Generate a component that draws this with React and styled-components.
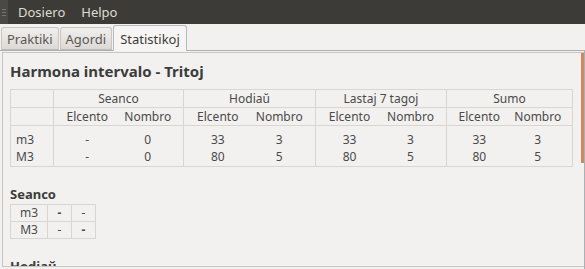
import React from 'react';
import styled, { createGlobalStyle } from 'styled-components';

const GlobalStyle = createGlobalStyle`
  html, body {
    margin: 0;
    padding: 0;
    background: #f2f1f0;
  }
  body {
    font-family: "Noto Sans", "DejaVu Sans", sans-serif;
    color: #3c3c3c;
  }
`;

const Window = styled.div`
  width: 585px;
  height: 269px;
  display: flex;
  flex-direction: column;
  overflow: hidden;
  background: #f2f1f0;
`;

const MenuBar = styled.div`
  height: 24px;
  background: #3c3b37;
  display: flex;
  align-items: center;
`;

const Grip = styled.div`
  width: 8px;
  height: 24px;
  background: #4a4945;
  display: flex;
  flex-direction: column;
  justify-content: center;
  align-items: center;
  gap: 2px;

  span {
    width: 4px;
    height: 1px;
    background: #77756f;
  }
`;

const MenuItem = styled.div`
  color: #dfdbd2;
  font-size: 13px;
  padding: 0 8px;
  margin-left: ${p => (p.first ? '2px' : '0')};
`;

const TabBar = styled.div`
  height: 26px;
  display: flex;
  align-items: flex-end;
  padding-left: 1px;
  gap: 1px;
`;

const Tab = styled.div`
  height: ${p => (p.active ? '26px' : '23px')};
  padding: 0 ${p => (p.active ? '6px' : '5px')};
  box-sizing: border-box;
  display: flex;
  align-items: center;
  font-size: 13px;
  color: ${p => (p.active ? '#3c3c3c' : '#5a5855')};
  border: 1px solid ${p => (p.active ? '#b4bcc0' : '#c9c5c0')};
  border-bottom: ${p => (p.active ? 'none' : '1px solid #bfbab4')};
  border-radius: 3px 3px 0 0;
  background: ${p =>
    p.active ? '#f6f5f4' : 'linear-gradient(#f0efed, #dcd9d5)'};
  margin-bottom: ${p => (p.active ? '-1px' : '0')};
  position: relative;
  z-index: ${p => (p.active ? 2 : 1)};
`;

const Pane = styled.div`
  flex: 1;
  border-top: 1px solid #a8b1b5;
  border-right: 1px solid #a8b1b5;
  padding: 1px 0 2px 2px;
  display: flex;
  min-height: 0;
`;

const Viewport = styled.div`
  flex: 1;
  position: relative;
  border: 1px solid #cbc6c0;
  border-right: none;
  overflow: hidden;
  padding: 9px 0 0 7px;
`;

const ScrollThumb = styled.div`
  position: absolute;
  right: 0;
  top: 0;
  width: 3px;
  height: 110px;
  background: #d2875c;
`;

const Title = styled.div`
  font-size: 15px;
  font-weight: bold;
  color: #3c3c3c;
  line-height: 18px;
  margin-bottom: 9px;
`;

const Grid = styled.table`
  border-collapse: collapse;
  font-size: 12px;
  color: #4a4a4a;
  width: 562px;
  table-layout: fixed;

  td, th {
    font-weight: normal;
    padding: 0;
    text-align: center;
    line-height: 17px;
  }
`;

const HeadCell = styled.th`
  border: 1px solid #d9d5d1;
  height: 17px;
`;

const SubHead = styled.th`
  border-bottom: 1px solid #d9d5d1;
  border-left: ${p => (p.edge ? '1px solid #d9d5d1' : 'none')};
  border-right: ${p => (p.end ? '1px solid #d9d5d1' : 'none')};
  padding-right: ${p => (p.end && !p.edge ? '6px' : '0')} !important;
  padding-left: ${p => (p.edge && !p.end ? '2px' : '0')} !important;
  height: 17px;
`;

const Cell = styled.td`
  border-left: ${p => (p.edge ? '1px solid #d9d5d1' : 'none')};
  border-right: ${p => (p.end ? '1px solid #d9d5d1' : 'none')};
  text-align: ${p => (p.left ? 'left' : 'center')} !important;
  padding-left: ${p => (p.left ? '5px' : p.edge ? '2px' : '0')} !important;
  padding-right: ${p => (p.end && !p.left ? '6px' : '0')} !important;
  padding-top: ${p => (p.top ? '5px' : '0')} !important;
  padding-bottom: ${p => (p.bottom ? '1px' : '0')} !important;
`;

const DataBody = styled.tbody`
  tr:last-child td {
    border-bottom: 1px solid #d9d5d1;
  }
`;

const SectionTitle = styled.div`
  font-size: 13px;
  font-weight: bold;
  color: #3c3c3c;
  margin-top: 20px;
  line-height: 15px;
  margin-bottom: 2px;
`;

const Mini = styled.table`
  border-collapse: collapse;
  font-size: 12px;
  color: #4a4a4a;

  td {
    border: 1px solid #d9d5d1;
    height: 16px;
    line-height: 16px;
    padding: 0;
    text-align: center;
  }
`;

const MiniCell = styled.td`
  width: ${p => p.w}px;
  font-weight: ${p => (p.strong ? 'bold' : 'normal')};
`;

const groups = ['Seanco', 'Hodiaŭ', 'Lastaj 7 tagoj', 'Sumo'];
const widths = [130, 132, 131, 126];
const rows = [
  { name: 'm3', vals: ['-', '0', '33', '3', '33', '3', '33', '3'] },
  { name: 'M3', vals: ['-', '0', '80', '5', '80', '5', '80', '5'] },
];

export default function App() {
  return (
    <Window>
      <GlobalStyle />
      <MenuBar>
        <Grip>
          <span />
          <span />
          <span />
        </Grip>
        <MenuItem first>Dosiero</MenuItem>
        <MenuItem>Helpo</MenuItem>
      </MenuBar>
      <TabBar>
        <Tab>Praktiki</Tab>
        <Tab>Agordi</Tab>
        <Tab active>Statistikoj</Tab>
      </TabBar>
      <Pane>
        <Viewport>
          <ScrollThumb />
          <Title>Harmona intervalo - Tritoj</Title>
          <Grid>
            <colgroup>
              <col style={{ width: 43 }} />
              {widths.map((w, i) => (
                <React.Fragment key={i}>
                  <col style={{ width: w / 2 }} />
                  <col style={{ width: w / 2 }} />
                </React.Fragment>
              ))}
            </colgroup>
            <thead>
              <tr>
                <HeadCell />
                {groups.map(g => (
                  <HeadCell key={g} colSpan={2}>{g}</HeadCell>
                ))}
              </tr>
              <tr>
                <SubHead edge end />
                {groups.map(g => (
                  <React.Fragment key={g}>
                    <SubHead edge>Elcento</SubHead>
                    <SubHead end>Nombro</SubHead>
                  </React.Fragment>
                ))}
              </tr>
            </thead>
            <DataBody>
              {rows.map((r, ri) => (
                <tr key={r.name}>
                  <Cell left edge end top={ri === 0} bottom={ri === 1}>{r.name}</Cell>
                  {r.vals.map((v, i) => (
                    <Cell key={i} edge={i % 2 === 0} end={i % 2 === 1} top={ri === 0} bottom={ri === 1}>
                      {v}
                    </Cell>
                  ))}
                </tr>
              ))}
            </DataBody>
          </Grid>
          <SectionTitle>Seanco</SectionTitle>
          <Mini>
            <tbody>
              <tr>
                <MiniCell w={36}>m3</MiniCell>
                <MiniCell w={23} strong>-</MiniCell>
                <MiniCell w={23}>-</MiniCell>
              </tr>
              <tr>
                <MiniCell w={36}>M3</MiniCell>
                <MiniCell w={23}>-</MiniCell>
                <MiniCell w={23} strong>-</MiniCell>
              </tr>
            </tbody>
          </Mini>
          <SectionTitle>Hodiaŭ</SectionTitle>
        </Viewport>
      </Pane>
    </Window>
  );
}
